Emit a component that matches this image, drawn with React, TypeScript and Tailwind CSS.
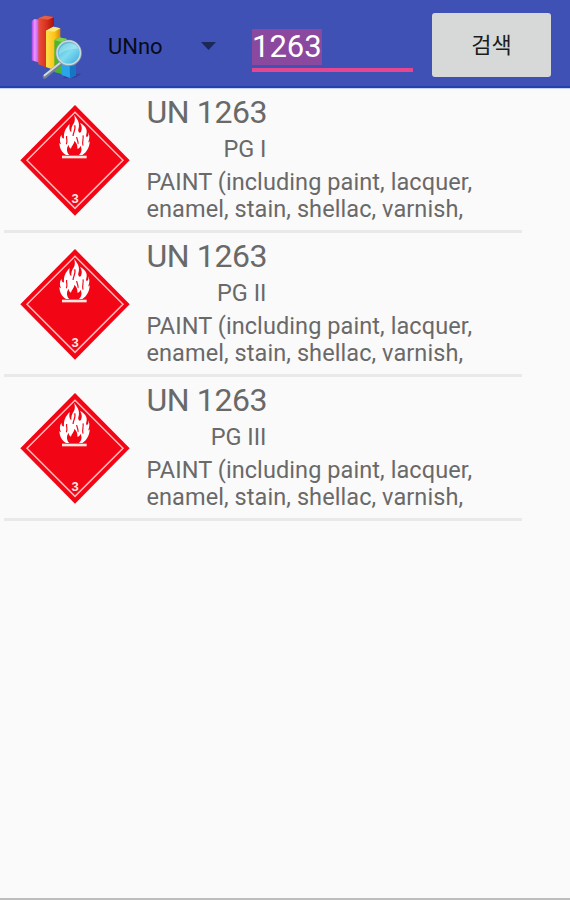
type Substance = {
    unNo: string;
    packingGroup: string;
    name: string;
};

const results: Substance[] = [
    {
        unNo: "UN 1263",
        packingGroup: "PG I",
        name: "PAINT (including paint, lacquer, enamel, stain, shellac, varnish,",
    },
    {
        unNo: "UN 1263",
        packingGroup: "PG II",
        name: "PAINT (including paint, lacquer, enamel, stain, shellac, varnish,",
    },
    {
        unNo: "UN 1263",
        packingGroup: "PG III",
        name: "PAINT (including paint, lacquer, enamel, stain, shellac, varnish,",
    },
];

function AppLogo() {
    return (
        <svg viewBox="0 0 225 255" className="h-[85px] w-[75px] shrink-0" aria-hidden="true">
            <defs>
                <linearGradient id="purple" x1="0" x2="1" y1="0" y2="0">
                    <stop offset="0" stopColor="#a93fe6" />
                    <stop offset="0.35" stopColor="#ee94ff" />
                    <stop offset="1" stopColor="#b23be8" />
                </linearGradient>
                <linearGradient id="red" x1="0" x2="1" y1="0" y2="0">
                    <stop offset="0" stopColor="#e8503a" />
                    <stop offset="0.5" stopColor="#d9321f" />
                    <stop offset="1" stopColor="#a80f0c" />
                </linearGradient>
                <linearGradient id="yellow" x1="0" x2="1" y1="0" y2="0">
                    <stop offset="0" stopColor="#ffe04a" />
                    <stop offset="0.6" stopColor="#fbc21a" />
                    <stop offset="1" stopColor="#d98808" />
                </linearGradient>
                <linearGradient id="lens" x1="0" x2="1" y1="0" y2="1">
                    <stop offset="0" stopColor="#3aa9c4" />
                    <stop offset="0.5" stopColor="#7fdcf0" />
                    <stop offset="1" stopColor="#35a5da" />
                </linearGradient>
            </defs>
            <path d="M140 208l44-2-18 12-38 2z" fill="#27347f" opacity="0.5" />
            <path d="M35 49l8-7 18 2v130l-26-8z" fill="url(#purple)" />
            <path d="M55 40l20-8 27 4v26L80 78v110l-25-10z" fill="url(#red)" />
            <path d="M55 40l20-8 27 4-18 8z" fill="#e2604b" />
            <path d="M78 77l22-12 21 5v124l-17 2-26-10z" fill="url(#yellow)" />
            <path d="M78 77l22-12 21 5-18 10z" fill="#ffe97a" />
            <path d="M103 106l14-9 24 5v98l-14 8-24-7z" fill="#4fb52b" />
            <path d="M103 106l14-9 24 5-14 9z" fill="#7fd34e" />
            <path d="M125 173l38-4 5 4v38l-18 8-25-9z" fill="#2ba5ea" />
            <path d="M149 182l19-9v38l-18 8z" fill="#1577c4" />
            <path d="M120 177L74 215" stroke="#73828f" strokeWidth="12" strokeLinecap="round" />
            <path d="M120 174L74 211" stroke="#cfdae0" strokeWidth="6" strokeLinecap="round" />
            <circle cx="146" cy="144" r="36" fill="url(#lens)" stroke="#8aa0ad" strokeWidth="7" />
            <circle cx="146" cy="143" r="35" fill="none" stroke="#c9dde4" strokeWidth="4.5" />
            <path d="M117 149c-2-19 12-33 31-34 14 0 23 7 28 17-18-3-42 3-59 17z" fill="#c4f3fa" opacity="0.4" />
        </svg>
    );
}

// Class 3 flammable liquid placard
function FlammableLabel() {
    return (
        <svg viewBox="0 0 360 366" className="h-[122px] w-[120px] shrink-0" role="img">
            <path d="M180 21L344 187L180 353L16 187z" fill="#f20514" />
            <path d="M180 43L324 187L180 331L36 187z" fill="none" stroke="#ffb9b9" strokeWidth="4.5" />
            <path
                d="M177 50C188 64 196 76 190 94C188 102 194 108 198 101C202 93 201 84 195 75C209 81 219 94 214 109C212 116 215 121 219 114C221 110 221 106 219 102C227 115 221 127 220 134L224 130C224 146 216 163 202 171L192 171C200 163 202 153 196 143C195 149 192 152 187 152C188 142 185 134 178 128C178 138 170 142 168 152C163 149 161 145 161 140C154 149 154 162 163 171L153 171C140 164 134 151 133 136L138 139C133 128 134 119 139 110C140 118 143 122 147 121C145 103 152 91 164 78C162 90 163 99 169 103C168 91 171 83 177 75C181 67 180 58 177 50Z"
                fill="#fff"
            />
            <path
                d="M179 82C184 94 174 104 174 114M185 117C186 126 191 131 189 138M204 112C207 123 200 132 204 143M155 114C153 124 159 129 154 139"
                fill="none"
                stroke="#f20514"
                strokeWidth="3.5"
            />
            <path d="M141 177h74" stroke="#ffe3e0" strokeWidth="8" />
            <text
                x="180"
                y="314"
                textAnchor="middle"
                fill="#ffe3e0"
                className="font-['Liberation_Sans',sans-serif] text-[39px] font-bold"
            >
                3
            </text>
        </svg>
    );
}

function ResultRow({ item }: { item: Substance }) {
    return (
        <li className="flex h-36 w-[518px] border-b-[3px] border-[#e9e9e9] pl-[11px]">
            <div className="pt-[9px]">
                <FlammableLabel />
            </div>
            <div className="ml-[11.5px] w-[350px] pt-1 text-[#696969]">
                <div className="w-[120px]">
                    <div className="h-[38px] whitespace-nowrap text-[32px] leading-[38px] tracking-[-0.4px]">{item.unNo}</div>
                    <div className="h-[37.5px] whitespace-nowrap text-right text-[23.5px] leading-[36px]">
                        {item.packingGroup}
                    </div>
                </div>
                <p className="text-[23.5px] leading-[27.5px] tracking-[0.08px]">{item.name}</p>
            </div>
        </li>
    );
}

export default function App() {
    return (
        <div className="flex h-[900px] w-[570px] flex-col overflow-hidden border-b-2 border-[#bdbdbd] bg-[#fafafa] font-[Roboto,'Noto_Sans_CJK_KR',sans-serif]">
            <header className="flex h-[89px] shrink-0 items-start border-b border-[#c5d2f5] bg-[#3f51b5] pl-5 shadow-[inset_0_-2px_0_#2440ae]">
                <div className="pt-[5px]">
                    <AppLogo />
                </div>
                <button className="mt-[30px] ml-[13px] flex h-8 w-[108px] items-center justify-between text-[22px] text-[#080b18]">
                    <span>UNno</span>
                    <svg viewBox="0 0 15 8" className="h-2 w-[15px]" aria-hidden="true">
                        <path d="M0 0h15L7.5 8z" fill="#1c2855" />
                    </svg>
                </button>
                <div className="mt-[29px] ml-9 h-[43px] w-[161px] border-b-4 border-[#e4468f]">
                    <span className="inline-block h-9 bg-[#8b489f] text-[31px] leading-[35px] text-white">
                        1263
                    </span>
                </div>
                <button className="mt-[13px] ml-[19px] h-16 w-[119px] rounded-[3px] bg-[#d6d9d8] text-[22px] text-[#1c1c1c]">
                    검색
                </button>
            </header>
            <ul className="flex flex-col pl-1">
                {results.map((item) => (
                    <ResultRow key={item.packingGroup} item={item} />
                ))}
            </ul>
        </div>
    );
}
